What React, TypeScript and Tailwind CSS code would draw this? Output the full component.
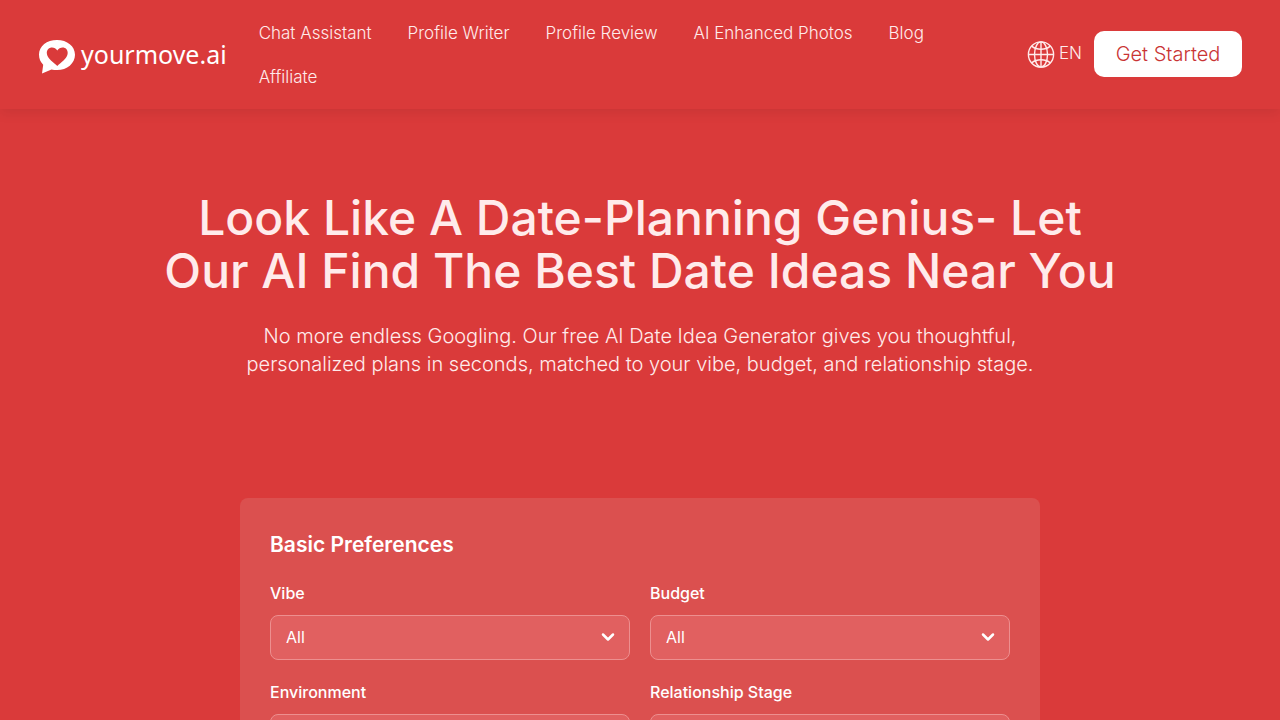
import { ChevronDown } from 'lucide-react';

export default function App() {
  return (
    <div className="min-h-screen bg-[#da3a3a] font-['Inter',sans-serif] text-[#ffebeb]">
      <Header />
      <main className="px-6 pb-16">
        <section className="pt-[82px] text-center">
          <h1 className="mx-auto max-w-[960px] text-5xl leading-[53px] font-medium">
            Look Like A Date-Planning Genius- Let Our AI Find The Best Date Ideas Near You
          </h1>
          <p className="mx-auto mt-[25px] max-w-[820px] text-xl leading-7 font-light">
            No more endless Googling. Our free AI Date Idea Generator gives you thoughtful,
            personalized plans in seconds, matched to your vibe, budget, and relationship stage.
          </p>
        </section>

        <form className="mx-auto mt-30 max-w-[800px] rounded-lg bg-[#db504f] p-[30px] text-white">
          <h2 className="mb-5 text-[21px] leading-[33px] font-semibold">Basic Preferences</h2>
          <div className="grid grid-cols-2 gap-5">
            <SelectField id="vibe" label="Vibe" options={["All", "Romantic", "Adventurous", "Relaxed"]} />
            <SelectField id="budget" label="Budget" options={["All", "Free", "Low", "High"]} />
            <SelectField id="environment" label="Environment" options={["All", "Indoor", "Outdoor"]} />
            <SelectField id="stage" label="Relationship Stage" options={["All", "First Date", "Dating", "Married"]} />
          </div>
        </form>
      </main>
    </div>
  );
}

const navLinks = [
  "Chat Assistant",
  "Profile Writer",
  "Profile Review",
  "AI Enhanced Photos",
  "Blog",
  "Affiliate",
];

function Header() {
  return (
    <header className="flex items-center px-[38px] pt-[9px] pb-2.5 shadow-[0_4px_12px_rgba(0,0,0,0.08)]">
      <a href="#" className="flex shrink-0 items-center gap-[5px]">
        <LogoMark />
        <span className="font-['Noto_Sans',sans-serif] text-[25px] leading-8 text-white">yourmove.ai</span>
      </a>
      <nav className="ml-8 flex flex-1 flex-wrap gap-x-9 pt-0.5">
        {navLinks.map((name) => (
          <a key={name} href="#" className="text-[17px] leading-[44px] font-light">
            {name}
          </a>
        ))}
      </nav>
      <div className="ml-10 flex shrink-0 items-center gap-3">
        <button type="button" className="flex items-center gap-1 text-[17px] font-light">
          <GlobeIcon />
          <span>EN</span>
        </button>
        <button
          type="button"
          className="h-[46px] w-[148px] rounded-[10px] bg-white text-xl font-light text-[#c93434]"
        >
          Get Started
        </button>
      </div>
    </header>
  );
}

interface SelectFieldProps {
  id: string;
  label: string;
  options: string[];
}

function SelectField({ id, label, options }: SelectFieldProps) {
  return (
    <div>
      <label htmlFor={id} className="mb-2.5 block text-base font-medium">
        {label}
      </label>
      <div className="relative">
        <select
          id={id}
          className="h-[45px] w-full appearance-none rounded-lg border border-[#ed8f8f] bg-[#e16060] px-[15px] pb-0.5 text-base text-white"
        >
          {options.map((option) => (
            <option key={option}>{option}</option>
          ))}
        </select>
        <ChevronDown
          className="pointer-events-none absolute top-3 right-3 text-white"
          size={20}
          strokeWidth={3}
        />
      </div>
    </div>
  );
}

// Speech bubble with a heart cut out of it
function LogoMark() {
  return (
    <svg width="38" height="40" viewBox="0 0 38 40" aria-hidden="true">
      <path
        fill="#fff"
        d="M19 6C8.800 6 1 12 1 20.500c0 4.300 1.500 7.600 4.200 10.200L4 39.500l9.500-4c1.700.4 3.600.6 5.500.6 10.200 0 18-6.900 18-15.400S29.200 6 19 6Z"
      />
      <path
        fill="#da3a3a"
        d="M19.300 32C16.500 29 8.800 24.500 8.800 19c0-3.200 2.300-5.400 5.200-5.400 2.200 0 4.100 1 5.300 2.900 1.200-1.900 3.200-2.900 5.400-2.900 2.900 0 5 2.200 5 5.400 0 5.500-7.600 10-10.400 13Z"
      />
    </svg>
  );
}

function GlobeIcon() {
  return (
    <svg width="28" height="28" viewBox="0 0 28 28" fill="none" stroke="currentColor" strokeWidth="1.4" aria-hidden="true">
      <circle cx="14" cy="14.500" r="12.600" />
      <ellipse cx="14" cy="14.500" rx="6.500" ry="12.600" />
      <path d="M14 1.900v25.200M1.400 14.500h25.200" />
      <path d="M4.700 6.100c2.300 2 5.500 3.100 9.300 3.100s7-1.100 9.300-3.100M4.700 22.900c2.300-2 5.500-3.100 9.300-3.100s7 1.100 9.300 3.100" />
    </svg>
  );
}
